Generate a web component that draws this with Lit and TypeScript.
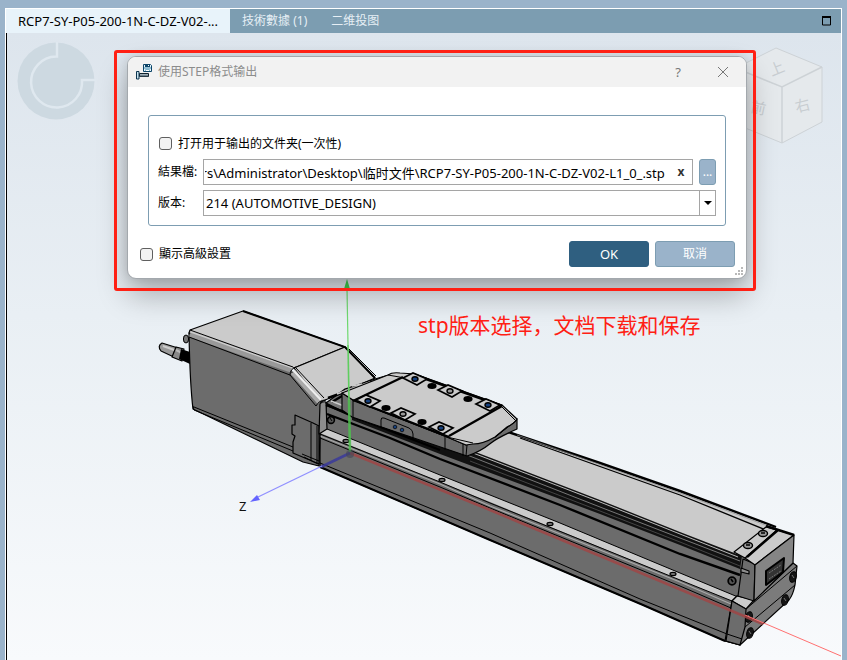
import { LitElement, html, svg, css } from "lit";
import { customElement, query } from "lit/decorators.js";

const PATH =
  "C:\\Users\\Administrator\\Desktop\\临时文件\\RCP7-SY-P05-200-1N-C-DZ-V02-L1_0_.stp";

/** 3D scene: actuator model with its axes. */
@customElement("model-scene")
class ModelScene extends LitElement {
  static styles = css`
    :host { display: block; }
    .scene { display: block; width: 100%; }
    .edge { stroke: #000; stroke-width: 1.2; stroke-linejoin: round; }
    .line { fill: none; stroke: #000; stroke-width: 1; }
    .bold { fill: none; stroke: #000; stroke-width: 2.4; }
    .light { fill: #cbcbcb; }
    .dark { fill: #6c6c6c; }
    .mid { fill: #8d8d8d; }
    .axis { font: 13px "Noto Sans", sans-serif; fill: #111; }
  `;

  private pad(x: number, y: number, blue: boolean) {
    return svg`<g transform="translate(${x} ${y})">
      <path class="light" stroke="#000" stroke-width="1.7" d="M-12-1L-2-6L12 0L2 6Z"/>
      <ellipse rx="3" ry="2.3" fill=${blue ? "#16417f" : "#999"} stroke="#000" stroke-width="1.4"/>
    </g>`;
  }

  private hole(x: number, y: number) {
    return svg`<ellipse cx=${x} cy=${y} rx="4.6" ry="3"/>`;
  }

  private screw(x: number, y: number) {
    return svg`<ellipse cx=${x} cy=${y} rx="3.2" ry="5.4" transform="rotate(15 ${x} ${y})" fill="#151515" stroke="#000"/>
      <path d="M${x - 1} ${y - 2}l2 3" stroke="#777"/>`;
  }

  private body() {
    return svg`
      <path class="edge dark" d="M320 430L327 404L345 398L470 430L755 560L747 606L740 645L725 641L643 605L490 540L320 467Z"/>
      <path class="light" d="M473 452L508 431L680 492L776 529L736 555L600 506Z"/>
      <path d="M352 416L440 447L473 451L600 500L680 532L742 556L740 569L680 545L600 514L440 454L352 420Z" fill="#111"/>
      <path d="M473 453L600 502L680 534L738 557" fill="none" stroke="#bbb"/>
      <path d="M462 453L600 507L680 538L740 561" fill="none" stroke="#777"/>
      <path d="M470 461L600 511L680 542L740 566" fill="none" stroke="#444"/>
      <path class="bold" d="M508 432L600 463L680 491L776 527"/>
      <path d="M520 438L680 495L766 530" fill="none" stroke="#000" stroke-width="1.3"/>
      <path d="M517 435L680 493L768 526" fill="none" stroke="#888" stroke-width=".7"/>
      <path class="bold" d="M327 414L390 438L440 459L560 505L680 554L740 575"/>
      <path class="bold" d="M327 405L352 416L440 450"/>
      <path class="light" d="M320 433L327 429L440 475L560 523L680 573L738 597L732 601L680 580L490 502L440 482Z"/>
      <path class="line" d="M327 429L440 475L560 523L680 573L738 597M320 434L440 482L490 503L680 580L732 601"/>
      <path d="M320 436L440 484L490 506L680 582L731 604" fill="none" stroke="#aaa" stroke-width="1.2"/>
      <path class="line" d="M320 438L440 487L490 508L680 586L731 608M320 463L490 533L640 599L727 634"/>
      <path d="M320 467L490 540L643 605L725 641" fill="none" stroke="#000" stroke-width="2"/>
      ${[[346, 441], [442, 480], [550, 524], [673, 574]].map(
        ([x, y]) => svg`<ellipse cx=${x} cy=${y} rx="3" ry="1.6" fill="#777" stroke="#000" stroke-width="1.2"/>`
      )}
      <circle cx="331" cy="420" r="3.4" fill="#555" stroke="#000" stroke-width="1.6"/>
      <path d="M330 418l2 3" stroke="#000"/>
      <circle cx="732" cy="581" r="3.8" fill="#555" stroke="#000" stroke-width="1.8"/>
      <path d="M731 579l2 3" stroke="#000" stroke-width="1.6"/>`;
  }

  private motor() {
    return svg`
      <ellipse cx="186" cy="339" rx="2.6" ry="4" fill="#777" stroke="#000"/>
      <path class="edge" fill="#999" d="M162 343L178 348L176 358L161 351Q157 346 162 343Z"/>
      <path d="M163 346L177 351" stroke="#ccc" stroke-width="2"/>
      <path class="edge" fill="#888" d="M176 347L184 349L182 361L172 357Z"/>
      <path d="M176 350L182 353" stroke="#bbb" stroke-width="2"/>
      <path d="M181 349L190 352V364L179 359Z"/>
      <path class="edge dark" d="M189 333L292 372L321 402L319 466L303 462L193 409Q190 385 189 333Z"/>
      <path class="edge light" d="M190 330L243 311L345 347L294 368L189 333Z"/>
      <path class="edge light" d="M345 347L375 378L345 391L321 402L294 368Z"/>
      <path d="M190 334L292 370" stroke="#999" stroke-width="6"/>
      <path d="M191 332L293 368" stroke="#ccc" stroke-width="1.5"/>
      <path class="line" d="M190 330L293 367M189 337L290 375M290 375Q290 369 296 367"/>
      <path d="M293 372L320 402" stroke="#aaa" stroke-width="6"/>
      <path d="M294 371L321 400" stroke="#eee" stroke-width="2"/>
      <path class="line" d="M290 375L316 406M296 368L324 398M316 406Q319 400 326 400M194 407L293 447M193 406L194 410L293 451"/>
      <path d="M243 311L345 347L375 378" fill="none" stroke="#000" stroke-width="2"/>
      <path class="line" d="M349 349L376 376"/>
      <path class="edge dark" d="M295 415L313 423L319 426V464L293 453V442L295 436L292 434V425L295 425Z"/>
      <path class="line" d="M311 423V461M317 426V463M302 454L319 461M304 457L318 464"/>
      <path class="edge mid" d="M320 404Q322 401 326 402L327 429L319 434Z"/>`;
  }

  private slider() {
    return svg`
      <path class="edge" fill="#777" d="M326 403L345 389L375 379L392 374L400 400L360 420Z"/>
      <path class="bold" d="M328 398L372 382M332 402L352 390M326 405L350 414"/>
      <path d="M337 394L370 382M331 401L344 406M352 386L362 384" stroke="#ccc" stroke-width="1.4"/>
      <path class="edge dark" d="M342 393L353 400L447 437L466 445L495 437L517 419V429Q497 438 491 443Q480 452 467 456L352 417L342 410Z"/>
      <path class="edge light" d="M342 393L388 375Q392 372 400 373L415 374L502 405L517 419Q514 424 507 427L495 437Q483 444 473 444L466 445L447 437L353 400Z"/>
      <path class="line" d="M353 400V417M445 437V450M463 444V456M467 445L466 456M447 437L473 443M502 407L516 421M517 420L495 437"/>
      <path class="bold" d="M403 377L353 401M502 406L449 436M412 374L502 406M353 400L449 437"/>
      <path class="line" d="M388 375L405 378L415 374"/>
      <path class="line" d="M381 427V420Q381 417 384 418L409 428Q413 430 413 434V439Z"/>
      <circle cx="395" cy="427" r="1.8" fill="#16417f" stroke="#000" stroke-width=".7"/>
      <circle cx="402" cy="430" r="1.8" fill="#16417f" stroke="#000" stroke-width=".7"/>
      ${this.pad(415, 379, true)}${this.pad(450, 391, false)}${this.pad(488, 405, true)}
      ${this.pad(368, 401, true)}${this.pad(403, 414, false)}${this.pad(441, 428, true)}
      ${this.hole(432, 386)}${this.hole(468, 399)}${this.hole(386, 408)}${this.hole(422, 422)}`;
  }

  private endCap() {
    return svg`
      <path class="edge" fill="#7b7b7b" d="M732 601L737 596L755 599L793 563L797 566L795 585Q793 595 789 600L740 645L725 641Z"/>
      <path class="edge light" d="M732 601L737 596L754 600L746 609Z"/>
      <path class="edge dark" d="M732 601L746 609L745 627L740 645L726 641Z"/>
      <path class="edge dark" d="M743 559L755 564L754 601L738 596Z"/>
      <path class="edge light" d="M745 558L777 530L794 535L755 565Z"/>
      <path class="edge" fill="#858585" d="M755 565L794 535L793 563L754 601Z"/>
      <path class="edge light" d="M734 552L766 527L777 530L745 558Z"/>
      <path class="bold" d="M747 557L778 530M766 526L794 535"/>
      <path class="edge mid" d="M741 568L749 571V574L741 572Z"/>
      <ellipse cx="748" cy="545.5" rx="4.5" ry="3" fill="#999" stroke="#000" stroke-width="1.4"/>
      <ellipse cx="763" cy="533.5" rx="4.5" ry="3" fill="#999" stroke="#000" stroke-width="1.4"/>
      <path d="M746 545h4M761 533h4" stroke="#000" stroke-width="1.6"/>
      <path d="M766 571L784 558L783 572L766 585Z" fill="#333" stroke="#000" stroke-width="2" stroke-linejoin="round"/>
      <path d="M769 573L781 565M769 579L781 571" stroke="#777" stroke-dasharray="2 1"/>
      <path class="line" d="M746 609L797 566M745 627L795 585M727 634L742 639"/>
      ${this.screw(749, 617)}${this.screw(750, 633)}${this.screw(793, 577)}${this.screw(785, 600)}`;
  }

  render() {
    return html`<svg class="scene" viewBox="7 33 834 627" role="img" aria-label="RCP7">
      ${this.body()}${this.motor()}${this.slider()}${this.endCap()}
      <path d="M350 453L490 510L763 624" fill="none" stroke="#a04545" stroke-width="2.6" opacity=".85"/>
      <path d="M745 615L841 656" stroke="#ff7070"/>
      <path d="M350 453L321 467" stroke="#3a3a9c" stroke-width="3" opacity=".85"/>
      <path d="M322 466L258 497" stroke="#9090ff" stroke-width="1.3"/>
      <path d="M250 502L257 495L260 500Z" fill="#6464ff"/>
      <path d="M347 288L348 345" stroke="#6fd96f" stroke-width="1.2"/>
      <path d="M348 345L349 400" stroke="#5fce5f" stroke-width="1.6"/>
      <path d="M349 400L350 452" stroke="#4fc04f" stroke-width="2.6" opacity=".85"/>
      <path d="M347 279L350 289H344Z" fill="#3fd04f"/>
      <circle cx="350" cy="454" r="4" fill="#445" opacity=".6"/>
      <text class="axis" x="239" y="511">Z</text>
    </svg>`;
  }
}

@customElement("step-export-dialog")
class StepExportDialog extends LitElement {
  @query(".path") private path!: HTMLInputElement;

  firstUpdated() {
    this.path.scrollLeft = this.path.scrollWidth;
  }

  static styles = css`
    :host { display: block; }
    * { box-sizing: border-box; }
    button, input, select { font: inherit; margin: 0; }
    button { padding: 0; cursor: pointer; }
    .dialog {
      display: flex; flex-direction: column;
      border: 1px solid #a3a8ad; border-radius: 9px;
      background: #fff; color: #000; overflow: hidden;
      box-shadow: 0 16px 30px rgba(0, 0, 0, 0.28), 0 0 12px rgba(0, 0, 0, 0.12);
      position: relative;
    }
    .title {
      display: flex; align-items: center; height: 30px;
      padding: 0 15px 0 8px; background: #f2f2f2; color: #8c8c8c;
    }
    .title h1 { flex: 1; margin: 0 0 0 6px; font-size: 12px; font-weight: 400; }
    .tool { width: 16px; height: 20px; border: 0; background: none; color: #777; font-size: 13px; line-height: 20px; }
    .tool + .tool { margin-left: 29px; }
    .tool svg, .title svg { display: block; }
    .options {
      margin: 28px 20px 0; padding: 17px 9px 9px;
      border: 1px solid #7d9db2; border-radius: 3px;
      display: grid; grid-template-columns: 40px 1fr; column-gap: 5px; row-gap: 5px;
      align-items: center;
    }
    .check { display: flex; align-items: center; gap: 6px; height: 21px; }
    .wide { grid-column: 1 / -1; padding-left: 1px; }
    .check input {
      appearance: none; width: 13px; height: 13px;
      border: 1px solid #5f5f5f; border-radius: 3px; background: #f3f3f3;
    }
    .check input:checked { background: #2f5f80; }
    .file { display: flex; gap: 6px; }
    .field { display: flex; flex: 1; min-width: 0; height: 26px; border: 1px solid #a5a5a5; padding: 0 3px 0 1px; }
    .path { flex: 1; min-width: 0; border: 0; padding: 0; background: none; outline: 0; height: 24px; font-size: 13px; }
    .clear { width: 16px; margin-left: 8px; border: 0; background: none; color: #333; font-weight: 700; }
    .browse { width: 17px; height: 26px; border: 1px solid #7d9db2; border-radius: 3px; background: #9ab3ca; color: #fff; }
    .version { position: relative; display: block; }
    .version select {
      appearance: none; display: block; width: 100%; height: 26px; padding: 0 20px 0 2px;
      border: 1px solid #a5a5a5; border-radius: 0; background: #fff; color: #000; font-size: 13px;
    }
    .arrow {
      position: absolute; right: 0; top: 0; width: 17px; height: 26px; border: 1px solid #a5a5a5;
      display: grid; place-items: center; pointer-events: none;
    }
    .footer { display: flex; align-items: center; gap: 6px; padding: 15px 11px 11px 12px; }
    .footer .check { flex: 1; }
    .action { width: 80px; height: 26px; border: 1px solid #7d9db2; border-radius: 3px; background: #9ab3ca; color: #fff; }
    .primary { border-color: #2f5f80; background: #2f5f80; font-size: 13px; }
    .grip { position: absolute; right: 3px; bottom: 2px; }
  `;

  render() {
    return html`<section class="dialog" role="dialog" aria-labelledby="title">
      <header class="title">
        <svg width="16" height="18" viewBox="0 0 16 18">
          <path d="M7.500 1.500h7l1 1v6h-8z" fill="#e8f6fc" stroke="#0c4468"/>
          <path d="M9 1h5v3H9z" fill="#0c4468"/><path d="M12 2h1v1h-1z" fill="#fff"/>
          <path d="M8 5h7" stroke="#3c86ab"/>
          <path d="M9.500 8V6.500h4V8" fill="#fff" stroke="#7fb4cc"/>
          <path d="M3.500 10.500h9v3h-9z" fill="#9fb0b9" stroke="#10222e"/>
          <path d="M4 13h8" stroke="#425461"/>
          <path d="M.5 8.500h2.500v7.500H.5z" fill="#c9e3ef" stroke="#0c3550"/>
        </svg>
        <h1 id="title">使用STEP格式输出</h1>
        <button class="tool" aria-label="?">?</button>
        <button class="tool" aria-label="关闭">
          <svg width="16" height="20" viewBox="0 0 16 20"><path d="M3 5l10 10M13 5L3 15" stroke="#777" fill="none"/></svg>
        </button>
      </header>
      <div class="options">
        <label class="check wide"><input type="checkbox" />打开用于输出的文件夹(一次性)</label>
        <label for="path">結果檔:</label>
        <div class="file">
          <div class="field">
            <input class="path" id="path" type="text" .value=${PATH} />
            <button class="clear">x</button>
          </div>
          <button class="browse">...</button>
        </div>
        <label for="version">版本:</label>
        <div class="version">
          <select id="version"><option>214 (AUTOMOTIVE_DESIGN)</option></select>
          <span class="arrow"><svg width="8" height="4" viewBox="0 0 8 4"><path d="M0 0h8L4 4z"/></svg></span>
        </div>
      </div>
      <footer class="footer">
        <label class="check"><input type="checkbox" />顯示高級設置</label>
        <button class="action primary">OK</button>
        <button class="action">取消</button>
      </footer>
      <svg class="grip" width="9" height="9" viewBox="0 0 9 9" fill="#b9b9b9">
        <path d="M7 0h2v2H7zM4 3h2v2H4zM7 3h2v2H7zM1 6h2v2H1zM4 6h2v2H4zM7 6h2v2H7z"/>
      </svg>
    </section>`;
  }
}

@customElement("app-root")
class AppRoot extends LitElement {
  static styles = css`
    :host {
      display: flex; min-height: 100vh; box-sizing: border-box; padding: 8px 5px 0 5px;
      background: #9ab3ca; color: #000;
      font: 12px/18px "Noto Sans", "Noto Sans CJK SC", sans-serif;
    }
    .panel { flex: 1; min-width: 0; display: flex; flex-direction: column; border: solid #fff; border-width: 1px 1px 0; }
    .tabs { display: flex; height: 24px; background: #7c9db1; }
    .tab { border: 0; margin: 0; padding: 0 12px; font: inherit; background: none; color: #e6eff5; white-space: nowrap; }
    .active { background: #e8f3fa; color: #000; font-size: 13px; }
    .maximize { margin: 0 9px 0 auto; padding: 0; border: 0; background: none; }
    .maximize svg { display: block; }
    .viewport {
      flex: 1; position: relative; overflow: hidden; border-left: 1px solid #000;
      background: linear-gradient(#dde5ed, #e9eff4 45%, #f8fafc);
    }
    .scene, .logo, .cube { position: absolute; top: 0; }
    .scene { left: 0; right: 0; }
    .logo { left: 8px; top: 8px; }
    .cube { right: 16px; top: 13px; }
    .cube text { font: 15px "Noto Sans CJK SC", sans-serif; fill: #c8cdd1; }
    .callout { position: relative; margin: 17px 85px 0 107px; padding: 6px 9px 12px 13px; }
    .callout::after { content: ""; position: absolute; inset: 0; border: 3px solid #ff2014; border-radius: 3px; pointer-events: none; }
    .note { position: relative; margin: 19px 0 0 411px; font-size: 21px; line-height: 30px; color: #ff2014; white-space: nowrap; }
  `;

  render() {
    return html`<main class="panel">
      <nav class="tabs">
        <button class="tab active">RCP7-SY-P05-200-1N-C-DZ-V02-...</button>
        <button class="tab">技術數據 (1)</button>
        <button class="tab">二维投图</button>
        <button class="maximize" aria-label="最大化">
          <svg width="11" height="10" viewBox="0 0 11 10"><path d="M1.500 1v8h8V1" fill="none" stroke="#000"/><path d="M1 0h9v2H1z"/></svg>
        </button>
      </nav>
      <div class="viewport">
        <model-scene class="scene"></model-scene>
        <svg class="logo" width="82" height="80" viewBox="15 42 82 80">
          <circle cx="56" cy="82" r="38.500" fill="#cdd9e1"/>
          <path d="M57 43v14.500H56A25.500 25.500 0 1 0 82 81H96" fill="none" stroke="#dfe8ef" stroke-width="2.500"/>
        </svg>
        <svg class="cube" width="90" height="100" viewBox="735 46 90 100">
          <path d="M776 48L822 67V122L782 143L738 125V67Z" fill="#e5e9ec" stroke="#cdd2d6"/>
          <path d="M738 69L782 87L822 67M782 87V143" fill="none" stroke="#cdd2d6" stroke-width="1.500"/>
          <text x="769" y="74" transform="rotate(-22 776 68)">上</text>
          <text x="751" y="113" transform="rotate(12 757 108)">前</text>
          <text x="795" y="111" transform="rotate(-14 802 106)">右</text>
        </svg>
        <div class="callout"><step-export-dialog></step-export-dialog></div>
        <p class="note">stp版本选择，文档下载和保存</p>
      </div>
    </main>`;
  }
}
